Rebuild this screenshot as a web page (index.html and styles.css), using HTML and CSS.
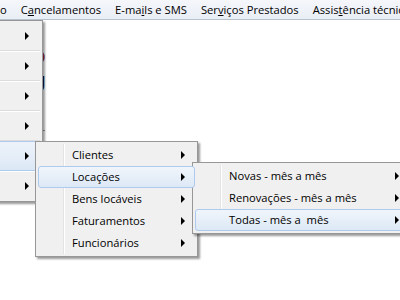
FILE: index.html
```html
<!DOCTYPE html>
<html lang="pt">
<head>
  <meta charset="UTF-8" />
  <title>Menu</title>
  <link rel="stylesheet" href="styles.css">
</head>
<body>
  <div class="menubar">
    <span class="menubar-item">o</span>
    <span class="menubar-item">C<u>a</u>ncelamentos</span>
    <span class="menubar-item">E-ma<u>i</u>ls e SMS</span>
    <span class="menubar-item">Ser<u>v</u>iços Prestados</span>
    <span class="menubar-item">Assis<u>t</u>ência técnica</span>
  </div>

  <div class="workspace">
    <div class="logo">
      <span class="logo-top">Ɔ</span>
      <span class="logo-bottom">U</span>
    </div>
    <div class="rule"></div>

    <!-- first level, mostly off the left edge -->
    <div class="menu menu-main">
      <div class="main-item"><span class="arrow"></span></div>
      <div class="main-item"><span class="arrow"></span></div>
      <div class="main-item"><span class="arrow"></span></div>
      <div class="main-item"><span class="arrow"></span></div>
      <div class="main-item active"><span class="arrow"></span></div>
      <div class="main-item"><span class="arrow"></span></div>
    </div>

    <div class="menu menu-reports">
      <div class="menu-item"><span class="label">Clientes</span><span class="arrow"></span></div>
      <div class="menu-item active"><span class="label">Locações</span><span class="arrow"></span></div>
      <div class="menu-item"><span class="label">Bens locáveis</span><span class="arrow"></span></div>
      <div class="menu-item"><span class="label">Faturamentos</span><span class="arrow"></span></div>
      <div class="menu-item"><span class="label">Funcionários</span><span class="arrow"></span></div>
    </div>

    <div class="menu menu-rentals">
      <div class="menu-item"><span class="label">Novas - mês a mês</span><span class="arrow"></span></div>
      <div class="menu-item"><span class="label">Renovações - mês a mês</span><span class="arrow"></span></div>
      <div class="menu-item active"><span class="label">Todas - mês a &nbsp;mês</span><span class="arrow"></span></div>
    </div>
  </div>
</body>
</html>
```

FILE: styles.css
```css
* {
  box-sizing: border-box;
  margin: 0;
  padding: 0;
}

body {
  width: 400px;
  height: 300px;
  overflow: hidden;
  background: #fff;
  font-family: 'Open Sans', 'Noto Sans', sans-serif;
  font-size: 11.2px;
  color: #000;
}

.menubar {
  display: flex;
  height: 20px;
  align-items: center;
  white-space: nowrap;
  overflow: hidden;
  background: linear-gradient(#f5f7fb, #e9edf5);
  border-bottom: 1px solid #b9c1cf;
  margin-left: -7px;
}

.menubar-item {
  padding: 0 7px;
  line-height: 19px;
}

.menubar-item u {
  text-underline-offset: 1px;
}

.workspace {
  position: relative;
  height: 280px;
}

.logo {
  position: absolute;
  left: 20px;
  top: 26px;
  display: flex;
  flex-direction: column;
  align-items: flex-end;
  width: 26px;
  font-family: 'DejaVu Sans', sans-serif;
  font-weight: bold;
  line-height: 22px;
}

.logo-top {
  color: #a3382c;
  font-size: 20px;
}

.logo-bottom {
  color: #111;
  font-size: 22px;
  margin-top: 6px;
}

.rule {
  position: absolute;
  left: 30px;
  top: 110px;
  width: 15px;
  height: 1px;
  background: #9a9a9a;
}

.menu {
  position: absolute;
  background: #f0f0f0;
  border: 1px solid #979797;
  box-shadow: 2px 2px 2px rgba(0, 0, 0, 0.4);
  padding: 2px;
}

/* gutter line next to the icon column */
.menu::before {
  content: '';
  position: absolute;
  top: 2px;
  bottom: 2px;
  left: 27px;
  width: 1px;
  background: #e2e3e3;
  box-shadow: 1px 0 0 #fff;
}

.menu-main {
  left: -160px;
  top: 0;
  width: 203px;
  padding: 0 2px;
}

.menu-main::before {
  display: none;
}

.main-item {
  height: 30px;
  display: flex;
  align-items: center;
  justify-content: flex-end;
  padding-right: 11px;
  border-bottom: 1px solid #dcdcdc;
  box-shadow: 0 1px 0 #fff;
  position: relative;
}

.main-item:last-child {
  border-bottom: none;
  box-shadow: none;
}

.main-item.active {
  background: linear-gradient(#eef3fa, #dce8f6);
  border: 1px solid #aecbef;
  border-radius: 3px;
  padding-right: 10px;
}

.menu-reports {
  left: 35px;
  top: 121px;
  width: 163px;
}

.menu-rentals {
  left: 192px;
  top: 142px;
  width: 220px;
}

.menu-item {
  height: 22px;
  display: flex;
  align-items: center;
  padding-left: 33px;
  padding-right: 9px;
  border: 1px solid transparent;
  border-radius: 3px;
  position: relative;
  z-index: 1;
}

.menu-item.active {
  background: linear-gradient(#f0f5fb, #dde9f6);
  border-color: #aecbef;
}

.menu-item .label {
  flex: 1;
  white-space: nowrap;
  padding-bottom: 2px;
}

.arrow {
  width: 0;
  height: 0;
  border-top: 4px solid transparent;
  border-bottom: 4px solid transparent;
  border-left: 4px solid #000;
}
```
